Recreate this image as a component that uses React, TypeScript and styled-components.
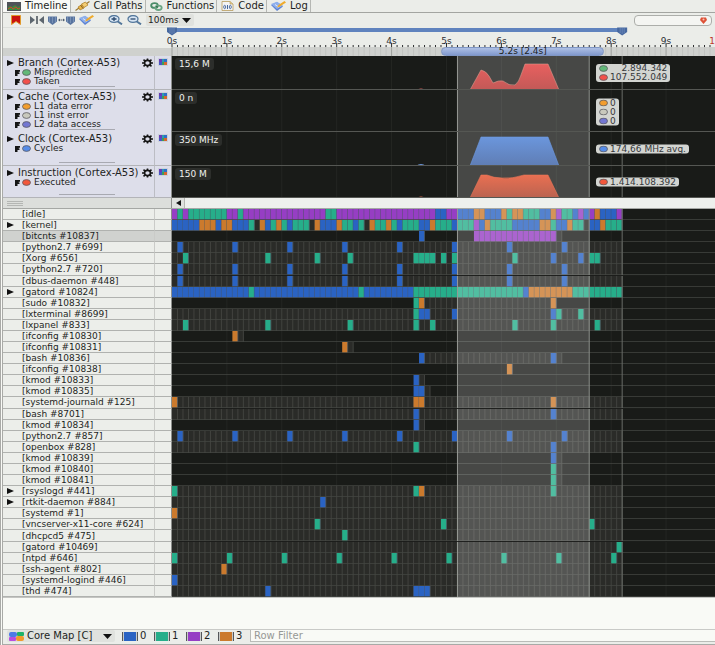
import React from "react";
import styled, { createGlobalStyle } from "styled-components";

const GlobalStyle = createGlobalStyle`
  *, *::before, *::after { box-sizing: border-box; }
  body { margin: 0; background: #f9faf6; }
  body, button, input, select { font-family: "DejaVu Sans", "Noto Sans", sans-serif; font-size: 9px; color: #1d1f22; }
  button, input, select { margin: 0; padding: 0; border: 0; background: none; }
  svg { display: block; }
`;

/* ---------- data ---------- */

type Core = "B" | "G" | "P" | "O";

const coreColors: Record<Core, string> = { B: "#2a63c3", G: "#26ae8a", P: "#963ec4", O: "#cb7a2d" };

const CELL = 1.011;
const SECONDS = [0, 1, 2, 3, 4, 5, 6, 7, 8, 9];
const SEL_START = 52;
const SEL_END = 76;
const CAPTURE_END = 82;
const pct = (cell: number) => `${(cell * CELL).toFixed(3)}%`;

type Run = [Core, number, number?];

interface Thread {
  name: string;
  expandable?: boolean;
  selected?: boolean;
  alive?: [number, number][];
  runs: Run[];
}

const FULL: [number, number][] = [[0, 82]];
const everyTen: Run[] = [1, 11, 21, 31, 41, 51, 61, 71].map((c) => ["B", c] as Run);

const sequence = (text: string): Run[] => {
  const runs: Run[] = [];
  let at = 0;
  for (const [, count, core] of text.matchAll(/(\d+)([BGPO.])/g)) {
    if (core !== ".") runs.push([core as Core, at, Number(count)]);
    at += Number(count);
  }
  return runs;
};

const threads: Thread[] = [
  { name: "[idle]", alive: FULL, runs: sequence("1P1G1P7G2P1G15P2G18P2B2P3B2O3B1O1G2O3G2B1O1P2G1B1P1B1P1O3B1P") },
  { name: "[kernel]", expandable: true, alive: FULL, runs: sequence("5B3O1B2O3B1G1.1O1B1G1O1G1B3G1.1O3B1O2G1B1G1.1O2G1O1G1B3G2B1O3G1B3G1P1B1O4G5B2O1G2B1O2G1.2B1O3G") },
  { name: "[bitcnts #10837]", selected: true, alive: [[70, 71]], runs: [["B", 45], ["P", 55, 15]] },
  { name: "[python2.7 #699]", alive: FULL, runs: everyTen },
  { name: "[Xorg #656]", alive: FULL, runs: [["G", 2], ["G", 17], ["G", 26], ["G", 32], ["G", 44, 4], ["G", 49], ["G", 51], ["G", 62], ["B", 69], ["B", 74], ["G", 76, 2]] },
  { name: "[python2.7 #720]", alive: FULL, runs: everyTen },
  { name: "[dbus-daemon #448]", alive: FULL, runs: everyTen },
  { name: "[gatord #10824]", expandable: true, alive: FULL, runs: sequence("14B1G19B1G9B20G1B8O9G") },
  { name: "[sudo #10832]", alive: [[45, 69]], runs: [["G", 44], ["O", 45], ["O", 69]] },
  { name: "[lxterminal #8699]", alive: FULL, runs: [["G", 44], ["B", 45, 2], ["B", 51], ["B", 69], ["G", 70], ["G", 74]] },
  { name: "[lxpanel #833]", alive: FULL, runs: [["G", 2], ["G", 17], ["G", 32], ["G", 44], ["G", 47], ["G", 62], ["G", 69], ["G", 77]] },
  { name: "[ifconfig #10830]", alive: [[12, 13]], runs: [["O", 11]] },
  { name: "[ifconfig #10831]", alive: [[32, 33]], runs: [["O", 31]] },
  { name: "[bash #10836]", alive: [[45, 71]], runs: [["B", 45], ["B", 69]] },
  { name: "[ifconfig #10838]", runs: [["O", 61]] },
  { name: "[kmod #10833]", alive: [[45, 46]], runs: [["B", 44]] },
  { name: "[kmod #10835]", alive: [[46, 47]], runs: [["B", 44, 2]] },
  { name: "[systemd-journald #125]", alive: FULL, runs: [["O", 0], ["O", 44, 2], ["O", 69]] },
  { name: "[bash #8701]", alive: FULL, runs: [["B", 44], ["B", 69]] },
  { name: "[kmod #10834]", alive: [[45, 46]], runs: [["B", 44]] },
  { name: "[python2.7 #857]", alive: FULL, runs: everyTen },
  { name: "[openbox #828]", alive: FULL, runs: [["G", 44], ["B", 69]] },
  { name: "[kmod #10839]", alive: [[70, 71]], runs: [["B", 69]] },
  { name: "[kmod #10840]", alive: [[70, 71]], runs: [["G", 69]] },
  { name: "[kmod #10841]", alive: [[70, 71]], runs: [["G", 69]] },
  { name: "[rsyslogd #441]", expandable: true, alive: FULL, runs: [["G", 0], ["G", 44], ["O", 45], ["G", 69]] },
  { name: "[rtkit-daemon #884]", expandable: true, alive: FULL, runs: [["B", 27]] },
  { name: "[systemd #1]", alive: FULL, runs: [["O", 0]] },
  { name: "[vncserver-x11-core #624]", alive: FULL, runs: [["G", 26], ["G", 49], ["G", 76]] },
  { name: "[dhcpcd5 #475]", alive: FULL, runs: [["G", 31]] },
  { name: "[gatord #10469]", alive: FULL, runs: [["G", 81]] },
  { name: "[ntpd #646]", alive: FULL, runs: [0, 10, 20, 30, 40, 50, 60, 70, 80].map((c) => ["G", c] as Run) },
  { name: "[ssh-agent #802]", alive: FULL, runs: [["O", 9]] },
  { name: "[systemd-logind #446]", alive: FULL, runs: [["B", 0]] },
  { name: "[thd #474]", alive: FULL, runs: [["B", 17], ["B", 44, 3]] },
];

interface Counter {
  title: string;
  height: number;
  scale: string;
  series: { name: string; color: string; value: string }[];
  shape?: { area: string; bump: string; top: string; bottom: string; edge: string };
}

const counters: Counter[] = [
  {
    title: "Branch (Cortex-A53)",
    height: 34,
    scale: "15,6 M",
    series: [
      { name: "Mispredicted", color: "#62b878", value: "2.894.342" },
      { name: "Taken", color: "#f2504b", value: "107.552.049" },
    ],
    shape: {
      area: "M298 34L309 14Q314 15 317 20L321 27Q327 24 331 25Q337 30 343 29Q347 26 349 19L353 8H376L387 34Z",
      bump: "M244 34Q249 31 254 34Z",
      top: "#e8605f",
      bottom: "#c25957",
      edge: "#d9998c",
    },
  },
  {
    title: "Cache (Cortex-A53)",
    height: 42,
    scale: "0 n",
    series: [
      { name: "L1 data error", color: "#f29d2e", value: "0" },
      { name: "L1 inst error", color: "#c9c9bd", value: "0" },
      { name: "L2 data access", color: "#7377d2", value: "0" },
    ],
  },
  {
    title: "Clock (Cortex-A53)",
    height: 34,
    scale: "350 MHz",
    series: [{ name: "Cycles", color: "#568ce8", value: "174,66 MHz avg." }],
    shape: { area: "M298 34L309 5H376L387 34Z", bump: "M244 34Q249 30 254 34Z", top: "#6b96dc", bottom: "#5f7db4", edge: "#6d9ae4" },
  },
  {
    title: "Instruction (Cortex-A53)",
    height: 32,
    scale: "150 M",
    series: [{ name: "Executed", color: "#f2573b", value: "1.414.108.392" }],
    shape: {
      area: "M298 32L309 9L315 9Q322 12 330 12Q340 13 352 9H376L387 32Z",
      bump: "M244 32Q249 29 254 32Z",
      top: "#e96f52",
      bottom: "#b96350",
      edge: "#ea7558",
    },
  },
];

/* ---------- layout ---------- */

const Window = styled.div`
  display: flex;
  flex-direction: column;
  min-height: 100vh;
  overflow: hidden;
  border-left: 3px double #a9aaa7;
  background: #f9faf6;
`;

const TabBar = styled.nav`
  display: flex;
  height: 13px;
  background: #ebede9;
  border-bottom: 1px solid #a3a5a1;
`;

const Tab = styled.button<{ $active?: boolean }>`
  display: flex;
  align-items: center;
  gap: 4px;
  height: 12px;
  padding: 0 2px 0 4px;
  font-size: 10px;
  line-height: 12px;
  background: ${(p) => (p.$active ? "#f9faf7" : "transparent")};
  border-right: 1px solid #b5b7b3;
`;

const Toolbar = styled.div`
  display: flex;
  align-items: center;
  gap: 4px;
  height: 14px;
  padding: 0 3px 0 8px;
  background: #ebede9;
`;

const IconButton = styled.button`
  display: flex;
  align-items: center;
  justify-content: center;
  height: 10px;
`;

const Spacer = styled.div<{ $w?: number }>`
  flex: ${(p) => (p.$w ? `0 0 ${p.$w}px` : "1")};
`;

const SelectBox = styled.label<{ $w: number; $size: number }>`
  display: flex;
  align-items: center;
  gap: 3px;
  width: ${(p) => p.$w}px;
  height: 12px;
  padding: 0 3px 0 2px;
  background: #e0e2de;
  border-radius: 2px;
  select {
    flex: 1;
    min-width: 0;
    height: 12px;
    line-height: 12px;
    font-size: ${(p) => p.$size}px;
    appearance: none;
    outline: 0;
  }
  svg { flex: none; }
`;

const SearchBox = styled.label`
  display: flex;
  align-items: center;
  width: 78px;
  height: 11px;
  padding: 0 4px;
  border: 1px solid #acaeaa;
  border-radius: 4px;
  background: #f4f5f2;
  input { flex: 1; min-width: 0; height: 9px; outline: 0; }
`;

const columns = "152px 17px minmax(0, 1fr)";

const RulerRow = styled.div`
  display: grid;
  grid-template-columns: ${columns};
  height: 29px;
`;

const RulerBlank = styled.div`
  grid-column: span 2;
  background: linear-gradient(#ebede9 20px, #cfd1ce 20px);
  border-top: 1px solid #dcdeda;
`;

const Ruler = styled.div`
  position: relative;
  background: linear-gradient(#ebede9 20px, #cfd1ce 20px);
`;

const RulerSvg = styled.svg`
  width: 100%;
  height: 29px;
  overflow: visible;
`;

const Span = styled.div`
  position: absolute;
  left: 49.6%;
  width: 30%;
  bottom: 0;
  height: 9px;
  line-height: 7px;
  text-align: center;
  border-radius: 5px;
  border: 1px solid #7f96c4;
  background: linear-gradient(#adbfe4, #8199cd);
`;

const CounterRow = styled.section<{ $h: number }>`
  display: grid;
  grid-template-columns: ${columns};
  height: ${(p) => p.$h}px;
`;

const CounterInfo = styled.div`
  display: flex;
  flex-direction: column;
  padding-top: 1px;
  background: #dddeea;
  border-right: 1px solid #bcbdc4;
  border-bottom: 1px solid #b3b4b8;
`;

const CounterTitle = styled.div`
  display: flex;
  align-items: center;
  justify-content: space-between;
  height: 11px;
  padding: 0 1px 0 4px;
  font-size: 10px;
  line-height: 11px;
  white-space: nowrap;
`;

const TitleText = styled.span`
  display: flex;
  align-items: center;
  gap: 4px;
`;

const Legend = styled.div`
  display: flex;
  align-items: center;
  gap: 3px;
  height: 9px;
  padding-left: 12px;
  line-height: 9px;
  svg:first-child { margin-right: -2px; }
`;

const Grip = styled.div`
  width: 56px;
  height: 1px;
  margin: auto auto 2px 56px;
  background: #a8a9b1;
`;

const CounterMode = styled.div`
  display: flex;
  justify-content: center;
  padding-top: 2px;
  background: #dddeea;
  border-right: 1px solid #8c8e8b;
  border-bottom: 1px solid #b3b4b8;
  svg { flex: none; }
`;

const Plot = styled.div`
  position: relative;
  background: #191b18;
`;

const FillSvg = styled.svg`
  position: absolute;
  inset: 0;
  width: 100%;
  height: 100%;
`;

const ScaleTag = styled.span`
  position: absolute;
  top: 2px;
  left: 3px;
  padding: 0 4px;
  line-height: 12px;
  color: #f0f1ee;
  background: #2c2e2b;
  border-radius: 3px;
`;

const ValueTag = styled.div`
  position: absolute;
  left: 78.1%;
  top: 50%;
  transform: translateY(-50%);
  padding: 0 3px;
  border-radius: 3px;
  background: #d3d5d1;
  color: #35373a;
`;

const Value = styled.div`
  display: flex;
  align-items: center;
  justify-content: space-between;
  gap: 2px;
  height: 9px;
  line-height: 9px;
  white-space: nowrap;
`;

const SplitRow = styled.div`
  display: grid;
  grid-template-columns: ${columns};
  height: 11px;
  background: #eef0ed;
  border-bottom: 1px solid #a5a7a4;
`;

const SplitHandle = styled.div`
  grid-column: span 2;
  padding: 3px 0 0 4px;
  background: #dcdedb;
  border-right: 1px solid #8c8e8b;
`;

const ScrollButton = styled.button`
  display: flex;
  align-items: center;
  justify-content: center;
  width: 13px;
  height: 10px;
  background: #dfe1de;
  border-right: 1px solid #b6b8b4;
`;

const ThreadList = styled.div`
  display: grid;
  flex: 1;
  grid-auto-rows: minmax(11px, 1fr);
`;

const ThreadRow = styled.div<{ $selected?: boolean }>`
  display: grid;
  grid-template-columns: ${columns};
  min-height: 0;
  background: ${(p) => (p.$selected ? "#d0d2cf" : "#eceeea")};
`;

const ThreadName = styled.div`
  display: grid;
  grid-template-columns: 16px 1fr;
  align-items: center;
  min-height: 0;
  padding-left: 3px;
  line-height: 10px;
  white-space: nowrap;
  border-right: 1px solid #cacbc8;
  border-bottom: 1px solid #b0b2af;
  span { grid-column: 2; }
  button { width: 9px; }
`;

const ThreadIcon = styled.div`
  border-right: 1px solid #8c8e8b;
  border-bottom: 1px solid #b0b2af;
`;

const Track = styled.div`
  position: relative;
  background: #191b18;
`;

const Blank = styled.div`
  height: 32px;
  border-top: 1px solid #c4c5c2;
`;

const Footer = styled.footer`
  display: flex;
  align-items: center;
  height: 16px;
  padding: 0 0 2px 4px;
  font-size: 10px;
  border-top: 1px solid #c9cac7;
  border-bottom: 1px solid #a9aaa7;
  background: #ebede9;
`;

const CoreKey = styled.span`
  display: flex;
  align-items: center;
  gap: 2px;
  width: 32px;
  line-height: 12px;
`;

const Swatch = styled.i<{ $core: Core }>`
  flex: none;
  width: 16px;
  height: 9px;
  border: solid #55575a;
  border-width: 0 1px;
  background: ${(p) => coreColors[p.$core]};
  box-shadow: inset 1px 0 #c9cbc8, inset -1px 0 #c9cbc8;
`;

const RowFilter = styled.input`
  flex: 1;
  min-width: 0;
  height: 12px;
  padding-left: 3px;
  font-size: 10px;
  border-left: 1px solid #babcb8;
  border-bottom: 1px solid #babcb8;
  background: #f9faf6;
  outline: 0;
  &::placeholder { color: #969895; opacity: 1; }
`;

/* ---------- icons ---------- */

const Caret = () => (
  <svg width="9" height="5"><path d="M0 0H9L4.500 5Z" fill="#111" /></svg>
);

const Expander = () => (
  <svg width="7" height="6"><path d="M0 0L7 3L0 6Z" fill="#111" /></svg>
);

const Dot = ({ color }: { color: string }) => (
  <svg width="9" height="7"><ellipse cx="4.500" cy="3.500" rx="4" ry="2.900" fill={color} stroke="#5c5c62" strokeWidth="0.800" /></svg>
);

const SeriesMark = () => (
  <svg width="6" height="6"><path d="M0 0H5V1.700H3.700V2.500H4.500V4H2.500V6H0Z" fill="#151515" /></svg>
);

const Gear = () => (
  <svg width="11" height="10" viewBox="0 0 11 10">
    <ellipse cx="5.500" cy="5" rx="3" ry="2.600" fill="none" stroke="#141414" strokeWidth="1.700" />
    <path d="M5.500 0.500V2M5.500 8V9.500M0 5H2M9 5H11M1.500 1.600L3 3M8 7L9.500 8.400M1.500 8.400L3 7M8 3L9.500 1.600" stroke="#141414" strokeWidth="1.600" />
  </svg>
);

const ModeIcon = () => (
  <svg width="10" height="8">
    <rect width="10" height="8" fill="#cbd0dc" />
    <rect x="1" y="1" width="3" height="3" fill="#6a3cb4" />
    <rect x="4" y="1" width="2" height="3" fill="#2b9fae" />
    <rect x="6" y="1" width="3" height="3" fill="#2f6fc6" />
    <rect x="1" y="4" width="3" height="3" fill="#4556c4" />
    <rect x="4" y="4" width="2" height="3" fill="#3a9f5a" />
    <rect x="6" y="4" width="3" height="3" fill="#d6652f" />
  </svg>
);

const TimelineIcon = () => (
  <svg width="14" height="9">
    <rect width="14" height="9" fill="#4f5358" />
    <path d="M1 5L3 4L5 5L8 3L11 5L13 4V8H1Z" fill="#3d8a3d" />
    <path d="M1 7L4 5L6 7L9 5L11 7L13 6" fill="none" stroke="#d2442f" />
  </svg>
);

const CallPathsIcon = () => (
  <svg width="15" height="10" viewBox="0 0 15 10">
    <path d="M0.500 9.500L4 7M11 3L14.500 0.500" stroke="#9a7a35" strokeWidth="1.200" />
    <path d="M3 6L7 3.500L9 7L5 9Z" fill="#e9b548" stroke="#a97a22" strokeWidth="0.700" />
    <path d="M6.500 3L10.500 1L13 4L9 6.500Z" fill="#f3cd73" stroke="#a97a22" strokeWidth="0.700" />
    <path d="M5.500 4L8 7.500" stroke="#8d6520" />
  </svg>
);

const FunctionsIcon = () => (
  <svg width="13" height="9" viewBox="0 0 13 9">
    <ellipse cx="4.500" cy="3.500" rx="3.300" ry="2.400" fill="none" stroke="#4a8c68" strokeWidth="1.900" />
    <ellipse cx="8.500" cy="5.800" rx="3.200" ry="2.200" fill="none" stroke="#6aa583" strokeWidth="1.800" />
    <path d="M6 4.500L8 5" stroke="#2f6a4b" />
  </svg>
);

const CodeIcon = () => (
  <svg width="13" height="10" viewBox="0 0 13 10">
    <path d="M1 0.500H9L12 3V9.500H1Z" fill="#f3f4f6" stroke="#b79c5c" strokeWidth="0.800" />
    <path d="M9 0.500V3H12" fill="#e2c88b" stroke="#b79c5c" strokeWidth="0.600" />
    <ellipse cx="3.700" cy="6" rx="1" ry="1.700" fill="none" stroke="#44679f" strokeWidth="0.900" />
    <path d="M6.500 4V8" stroke="#44679f" />
    <ellipse cx="9.300" cy="6" rx="1" ry="1.700" fill="none" stroke="#44679f" strokeWidth="0.900" />
  </svg>
);

const LogIcon = () => (
  <svg width="15" height="10" viewBox="0 0 15 10">
    <path d="M0 4L6 1L12 5.500L6 10Z" fill="#5d83d3" />
    <path d="M0 3L6 0.700L12 4.500L6 8Z" fill="#8fb0ec" />
    <path d="M4 3.500L7.500 6" stroke="#dfe8fa" />
    <path d="M6 6.500L7.500 4L13.500 0L15 1.500L8.500 5.800Z" fill="#efab2c" />
  </svg>
);

const BookmarkIcon = () => (
  <svg width="10" height="10"><path d="M0.500 0.500H9.500V9.500L5 6.500L0.500 9.500Z" fill="#c9130f" stroke="#e09a2c" /></svg>
);

const SnapIcon = () => (
  <svg width="14" height="8"><path d="M0 0L5 4L0 8ZM14 0L9 4L14 8Z" fill="#5d666f" /><path d="M7 0V8" stroke="#454c54" strokeWidth="1.500" /></svg>
);

const CalipersIcon = () => (
  <svg width="27" height="9">
    <path d="M0 0.500H9V5.500L4.500 9L0 5.500Z" fill="#58749f" />
    <path d="M18 0.500H27V5.500L22.500 9L18 5.500Z" fill="#58749f" />
    <path d="M1.500 1V6M4.500 1V7M7.500 1V6M19.500 1V6M22.500 1V7M25.500 1V6" stroke="#8299bd" strokeWidth="0.800" />
    <path d="M10 4L12 2.500V5.500ZM17 4L15 2.500V5.500Z" fill="#4d5a6b" />
    <path d="M12.500 4H14.500" stroke="#4d5a6b" />
  </svg>
);

const Lens = ({ plus }: { plus?: boolean }) => (
  <svg width="15" height="10" viewBox="0 0 15 10">
    <path d="M9 6L14 9.300" stroke="#53779b" strokeWidth="2" />
    <ellipse cx="6" cy="4" rx="5" ry="3.400" fill="#d7e5f3" stroke="#53779b" strokeWidth="1.300" />
    <path d={plus ? "M3.500 4H8.500M6 2V6" : "M3.500 4H8.500"} stroke="#2b4a6e" strokeWidth="1.300" />
  </svg>
);

const PinIcon = () => (
  <svg width="7" height="7"><path d="M1 0.500H6L7 3L3.500 7L0 3Z" fill="#dd5136" /><circle cx="3.500" cy="2.600" r="1" fill="#f6c5b8" /></svg>
);

const CoreMapIcon = () => (
  <svg width="15" height="9">
    <rect width="8" height="5" rx="2" fill="#4d7be8" />
    <rect x="8" width="7" height="4" rx="1" fill="#20b268" />
    <rect y="5" width="7" height="4" rx="1" fill="#b94de0" />
    <rect x="7" y="4" width="8" height="5" rx="2" fill="#f29a2a" />
  </svg>
);

/* ---------- drawings ---------- */

const TimeRuler = () => (
  <RulerSvg>
    <rect x="0" y="1" width={pct(CAPTURE_END)} height="4" fill="#5f83be" />
    {Array.from({ length: 99 }, (_, i) => (
      <g key={i}>
        <line x1={pct(i)} x2={pct(i)} y1={i % 10 ? 18 : 16} y2="20" stroke="#2c2e30" />
        <line x1={pct(i)} x2={pct(i)} y1="20" y2="29" stroke={i % 10 ? "#c2c4c1" : "#9fa19e"} />
      </g>
    ))}
    {SECONDS.map((s) => (
      <text key={s} x={pct(s * 10)} y="17" textAnchor="middle" fontSize="9" fill="#2c2e33">{s}s</text>
    ))}
    {[0, CAPTURE_END].map((c) => (
      <svg key={c} x={pct(c)} y="0" width="1" height="9" overflow="visible">
        <path d="M-5 0.500H5V5L0 8.500L-5 5Z" fill="#46689f" />
        <path d="M-2 1V6M0 1V7M2 1V6" stroke="#6f8dbd" strokeWidth="0.800" />
      </svg>
    ))}
    <text x="100%" y="17" textAnchor="end" fontSize="9" fill="#c0392b">1</text>
  </RulerSvg>
);

const SelectionShade = () => (
  <>
    <rect x={pct(SEL_START)} width={pct(SEL_END - SEL_START)} height="100%" fill="#fff" fillOpacity="0.200" />
    <line x1={pct(SEL_START)} x2={pct(SEL_START)} y2="100%" stroke="#989a96" />
    <line x1={pct(SEL_END)} x2={pct(SEL_END)} y2="100%" stroke="#8d8f8b" />
    <line x1={pct(CAPTURE_END)} x2={pct(CAPTURE_END)} y2="100%" stroke="#6a6c68" />
  </>
);

const SecondLines = () => (
  <>
    {SECONDS.slice(1).map((s) => (
      <line key={s} x1={pct(s * 10)} x2={pct(s * 10)} y2="100%" stroke="#242623" />
    ))}
  </>
);

const CounterPlot = ({ counter, id }: { counter: Counter; id: string }) => (
  <FillSvg>
    {counter.shape && (
      <linearGradient id={id} x1="0" x2="0" y1="0" y2="1">
        <stop offset="0" stopColor={counter.shape.top} />
        <stop offset="1" stopColor={counter.shape.bottom} />
      </linearGradient>
    )}
    <SecondLines />
    <SelectionShade />
    {counter.shape && (
      <svg width="100%" height="100%" viewBox={`0 0 543 ${counter.height}`} preserveAspectRatio="none">
        <path d={counter.shape.area} fill={`url(#${id})`} stroke={counter.shape.edge} strokeWidth="0.600" />
        <path d={counter.shape.bump} fill={counter.shape.top} />
      </svg>
    )}
    <rect y={counter.height - 1} width="100%" height="1" fill="#555753" />
  </FillSvg>
);

const ThreadTrack = ({ thread }: { thread: Thread }) => (
  <FillSvg>
    <SecondLines />
    {thread.alive?.map(([from, to]) => (
      <g key={from}>
        <rect x={pct(from)} width={pct(to - from)} height="100%" fill="#2a2b28" />
        {Array.from({ length: to - from }, (_, i) => (
          <line key={i} x1={pct(from + i + 1)} x2={pct(from + i + 1)} y2="100%" stroke="#42433f" />
        ))}
      </g>
    ))}
    {thread.runs.flatMap(([core, start, count = 1]) =>
      Array.from({ length: count }, (_, i) => (
        <g key={`${start}-${i}`}>
          <rect x={pct(start + i)} width={pct(1)} height="100%" fill={coreColors[core]} />
          <line x1={pct(start + i + 1)} x2={pct(start + i + 1)} y2="100%" stroke="#4d5a66" strokeOpacity="0.700" />
        </g>
      ))
    )}
    <svg y="100%" width="100%" height="1" overflow="visible">
      <rect y="-1" width="100%" height="1" fill="#454743" fillOpacity="0.800" />
    </svg>
    <SelectionShade />
  </FillSvg>
);

/* ---------- page ---------- */

const tabs = [
  { name: "Timeline", icon: <TimelineIcon /> },
  { name: "Call Paths", icon: <CallPathsIcon /> },
  { name: "Functions", icon: <FunctionsIcon /> },
  { name: "Code", icon: <CodeIcon /> },
  { name: "Log", icon: <LogIcon /> },
];

export default function App() {
  return (
    <>
      <GlobalStyle />
      <Window>
        <TabBar>
          {tabs.map((t, i) => (
            <Tab key={t.name} $active={i === 0}>{t.icon}{t.name}</Tab>
          ))}
        </TabBar>
        <Toolbar>
          <IconButton aria-label="Bookmark"><BookmarkIcon /></IconButton>
          <Spacer $w={1} />
          <IconButton aria-label="Snap to markers"><SnapIcon /></IconButton>
          <IconButton aria-label="Reset calipers"><CalipersIcon /></IconButton>
          <IconButton aria-label="Annotate"><LogIcon /></IconButton>
          <Spacer $w={6} />
          <IconButton aria-label="Zoom in"><Lens plus /></IconButton>
          <IconButton aria-label="Zoom out"><Lens /></IconButton>
          <SelectBox $w={48} $size={9}>
            <select aria-label="Resolution" defaultValue="100ms"><option>100ms</option></select>
            <Caret />
          </SelectBox>
          <Spacer />
          <SearchBox>
            <input aria-label="Search" />
            <PinIcon />
          </SearchBox>
        </Toolbar>
        <RulerRow>
          <RulerBlank />
          <Ruler>
            <TimeRuler />
            <Span>5.2s [2.4s]</Span>
          </Ruler>
        </RulerRow>
        {counters.map((c, i) => (
          <CounterRow key={c.title} $h={c.height}>
            <CounterInfo>
              <CounterTitle>
                <TitleText>
                  <IconButton aria-label={`Expand ${c.title}`}><Expander /></IconButton>
                  {c.title}
                </TitleText>
                <IconButton aria-label={`Configure ${c.title}`}><Gear /></IconButton>
              </CounterTitle>
              {c.series.map((s) => (
                <Legend key={s.name}><SeriesMark /><Dot color={s.color} />{s.name}</Legend>
              ))}
              <Grip />
            </CounterInfo>
            <CounterMode><ModeIcon /></CounterMode>
            <Plot>
              <CounterPlot counter={c} id={`area${i}`} />
              <ScaleTag>{c.scale}</ScaleTag>
              <ValueTag>
                {c.series.map((s) => (
                  <Value key={s.name}><Dot color={s.color} />{s.value}</Value>
                ))}
              </ValueTag>
            </Plot>
          </CounterRow>
        ))}
        <SplitRow>
          <SplitHandle>
            <svg width="16" height="6"><path d="M0 0.500H16M0 2.500H16M0 4.500H16" stroke="#b4b6b3" /></svg>
          </SplitHandle>
          <ScrollButton aria-label="Scroll left">
            <svg width="5" height="6"><path d="M5 0V6L0 3Z" fill="#111" /></svg>
          </ScrollButton>
        </SplitRow>
        <ThreadList>
          {threads.map((t) => (
            <ThreadRow key={t.name} $selected={t.selected}>
              <ThreadName>
                {t.expandable && <IconButton aria-label={`Expand ${t.name}`}><Expander /></IconButton>}
                <span>{t.name}</span>
              </ThreadName>
              <ThreadIcon />
              <Track><ThreadTrack thread={t} /></Track>
            </ThreadRow>
          ))}
        </ThreadList>
        <Blank />
        <Footer>
          <SelectBox $w={108} $size={10}>
            <CoreMapIcon />
            <select aria-label="Map mode" defaultValue="Core Map [C]"><option>Core Map [C]</option></select>
            <Caret />
          </SelectBox>
          <Spacer $w={7} />
          {(["B", "G", "P", "O"] as Core[]).map((core, i) => (
            <CoreKey key={core}><Swatch $core={core} />{i}</CoreKey>
          ))}
          <RowFilter aria-label="Row Filter" placeholder="Row Filter" />
        </Footer>
      </Window>
    </>
  );
}
